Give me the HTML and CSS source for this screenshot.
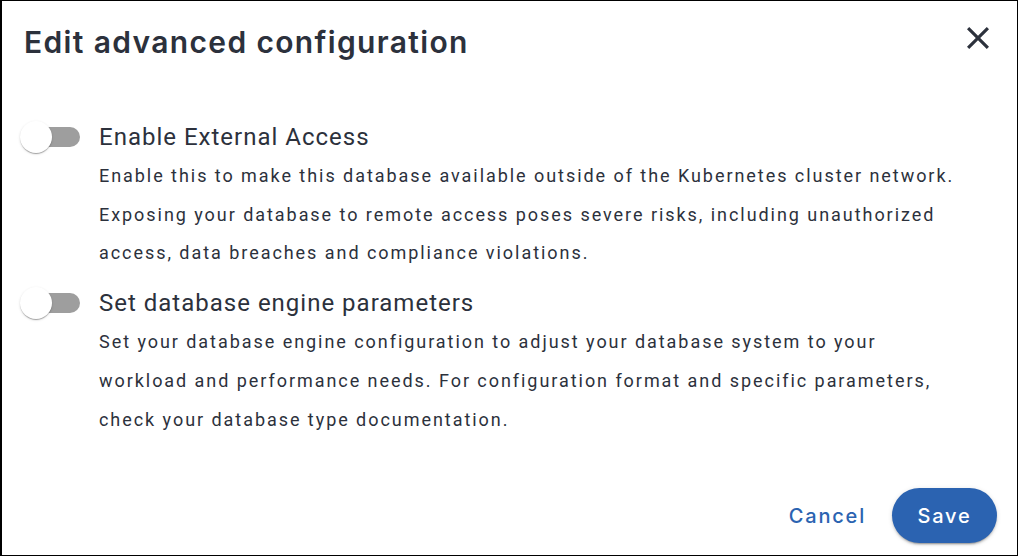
FILE: index.html
```html
<!DOCTYPE html>
<html lang="en">
<head>
<meta charset="utf-8">
<title>Edit advanced configuration</title>
<link rel="stylesheet" href="styles.css">
</head>
<body>
<div class="dialog">
  <header class="head">
    <h2 class="title">Edit advanced configuration</h2>
    <button class="close" aria-label="Close">
      <svg viewBox="5 5 14 14"><path d="M19 6.41 17.59 5 12 10.59 6.41 5 5 6.41 10.59 12 5 17.59 6.41 19 12 13.41 17.59 19 19 17.59 13.41 12z" fill="#2c313c"/></svg>
    </button>
  </header>
  <div class="content">
    <div class="option">
      <span class="switch"><span class="track"></span><span class="thumb"></span></span>
      <div class="text">
        <div class="label">Enable External Access</div>
        <p class="desc">Enable this to make this database available outside of the Kubernetes cluster network. Exposing your database to remote access poses severe risks, including unauthorized access, data breaches and compliance violations.</p>
      </div>
    </div>
    <div class="option">
      <span class="switch"><span class="track"></span><span class="thumb"></span></span>
      <div class="text">
        <div class="label">Set database engine parameters</div>
        <p class="desc">Set your database engine configuration to adjust your database system to your workload and performance needs. For configuration format and specific parameters, check your database type documentation.</p>
      </div>
    </div>
  </div>
  <footer class="actions">
    <button class="btn cancel">Cancel</button>
    <button class="btn save">Save</button>
  </footer>
</div>
</body>
</html>
```
FILE: styles.css
```css
* { box-sizing: border-box; }
html, body { margin: 0; padding: 0; background: #fff; }
body { font-family: Roboto, "Liberation Sans", sans-serif; color: #2c313c; }
.dialog {
  height: 556px;
  border: 1px solid #000;
  border-left-width: 2px;
  display: flex;
  flex-direction: column;
}
.head {
  display: flex;
  align-items: center;
  justify-content: space-between;
  padding: 22px 28px 0 22px;
}
.title {
  margin: 0;
  font-family: Inter, "Open Sans", sans-serif;
  font-weight: 600;
  font-size: 30px;
  line-height: 38px;
  letter-spacing: 1.35px;
  color: #2c313c;
}
.close {
  border: 0;
  background: none;
  padding: 0;
  width: 22px;
  height: 22px;
  display: flex;
  align-items: center;
  justify-content: center;
  cursor: pointer;
  margin-top: -8px;
}
.close svg { width: 22px; height: 22px; display: block; }
.content {
  flex: 1;
  padding: 58px 54px 0 18px;
  display: flex;
  flex-direction: column;
  gap: 12px;
}
.option {
  display: flex;
  align-items: flex-start;
}
.switch {
  position: relative;
  width: 62px;
  height: 36px;
  flex: none;
  margin-right: 17px;
}
.track {
  position: absolute;
  left: 2px;
  top: 8px;
  width: 58px;
  height: 20px;
  border-radius: 10px;
  background: #9e9e9e;
}
.thumb {
  position: absolute;
  left: 0;
  top: 2px;
  width: 32px;
  height: 32px;
  border-radius: 50%;
  background: #fff;
  box-shadow: 0 2px 1px -1px rgba(0,0,0,.2), 0 1px 1px 0 rgba(0,0,0,.14), 0 1px 3px 0 rgba(0,0,0,.12);
}
.label {
  font-size: 24px;
  line-height: 36px;
  letter-spacing: 1px;
  color: #2c313c;
}
.desc {
  margin: 2px 0 0;
  font-size: 18px;
  line-height: 38.7px;
  letter-spacing: 1.95px;
  color: #2c313c;
}
.actions {
  display: flex;
  justify-content: flex-end;
  align-items: center;
  gap: 14px;
  padding: 0 20px 12px 0;
}
.btn {
  font-family: Inter, "Open Sans", sans-serif;
  font-size: 20px;
  font-weight: 500;
  letter-spacing: 1.8px;
  border: 0;
  cursor: pointer;
}
.cancel {
  background: none;
  color: #2b63b1;
  padding: 8px 12px;
}
.save {
  background: #2b63b1;
  color: #fff;
  width: 105px;
  height: 55px;
  border-radius: 28px;
  box-shadow: 0 3px 1px -2px rgba(0,0,0,.2), 0 2px 2px 0 rgba(0,0,0,.14), 0 1px 5px 0 rgba(0,0,0,.12);
}
```
